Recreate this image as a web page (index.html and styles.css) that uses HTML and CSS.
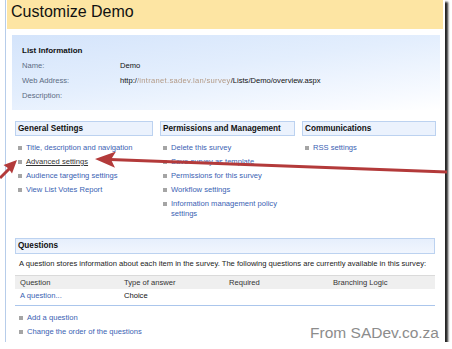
FILE: index.html
```html
<!DOCTYPE html>
<html lang="en">
  <head>
    <meta charset="UTF-8" />
    <title>Customize Demo</title>
    <link rel="stylesheet" href="styles.css">
  </head>
  <body>
    <div class="window">
      <div class="frame">
        <!-- Page title band -->
        <div class="title-bar">
          <h1>Customize Demo</h1>
        </div>

        <!-- List information panel -->
        <div class="info-panel">
          <h2>List Information</h2>
          <div class="info-row"><span class="label">Name:</span><span>Demo</span></div>
          <div class="info-row">
            <span class="label">Web Address:</span>
            <span>http:/<span class="masked">/intranet.sadev.lan/survey</span>/Lists/Demo/overview.aspx</span>
          </div>
          <div class="info-row"><span class="label">Description:</span><span></span></div>
        </div>

        <!-- Three settings columns -->
        <div class="settings">
          <div class="group">
            <h3 class="group-head">General Settings</h3>
            <ul class="links">
              <li><a href="#">Title, description and navigation</a></li>
              <li><a class="current" href="#">Advanced settings</a></li>
              <li><a href="#">Audience targeting settings</a></li>
              <li><a href="#">View List Votes Report</a></li>
            </ul>
          </div>
          <div class="group">
            <h3 class="group-head">Permissions and Management</h3>
            <ul class="links">
              <li><a href="#">Delete this survey</a></li>
              <li><a href="#">Save survey as template</a></li>
              <li><a href="#">Permissions for this survey</a></li>
              <li><a href="#">Workflow settings</a></li>
              <li><a href="#">Information management policy settings</a></li>
            </ul>
          </div>
          <div class="group">
            <h3 class="group-head">Communications</h3>
            <ul class="links">
              <li><a href="#">RSS settings</a></li>
            </ul>
          </div>
        </div>

        <!-- Questions -->
        <div class="questions">
          <h3 class="group-head tall">Questions</h3>
          <p class="note">A question stores information about each item in the survey. The following questions are currently available in this survey:</p>
          <div class="q-wrap">
            <table class="q-table">
              <colgroup>
                <col style="width:104px"><col style="width:105px"><col style="width:104px"><col>
              </colgroup>
              <tr class="q-head">
                <td>Question</td><td>Type of answer</td><td>Required</td><td>Branching Logic</td>
              </tr>
              <tr>
                <td><a href="#">A question...</a></td><td>Choice</td><td></td><td></td>
              </tr>
            </table>
          </div>
          <ul class="links after">
            <li><a href="#">Add a question</a></li>
            <li><a href="#">Change the order of the questions</a></li>
          </ul>
        </div>
      </div>

      <div class="watermark">From SADev.co.za</div>

      <!-- Red annotation arrows drawn over the screenshot -->
      <svg class="annot" width="452" height="349" viewBox="0 0 452 349">
        <line x1="447" y1="172" x2="110" y2="159.6" stroke="#b33a3a" stroke-width="3" />
        <polygon points="95,159 116,151.5 111,159.6 115,167.8" fill="#b33a3a" />
        <line x1="0" y1="178" x2="10" y2="168" stroke="#b33a3a" stroke-width="3" />
        <polygon points="17,160 12,173.5 8.5,168.5 3.5,165" fill="#b33a3a" />
      </svg>
    </div>
  </body>
</html>
```

FILE: styles.css
```css
body {
  margin: 0;
  background: #fff;
  font-family: "Liberation Sans", Arial, sans-serif;
  font-size: 7.6px;
  color: #111;
}
/* Screenshot window with drop shadow */
.window {
  position: relative;
  width: 445px;
  height: 342px;
  padding-left: 5px;
  box-sizing: border-box;
  background: #fff;
  box-shadow: 3px 2px 2px rgba(0,0,0,0.85);
}
.frame {
  height: 100%;
  border-left: 1px solid #b7cdea;
  padding-left: 1px;
  padding-right: 2px;
}
.title-bar {
  height: 29px;
  background: #fde5a3;
  padding-left: 4px;
}
h1 {
  margin: 0;
  font-weight: normal;
  font-size: 16px;
  line-height: 24px;
  color: #111;
}
/* List information */
.info-panel {
  margin: 6px 3px 0 5px;
  padding: 8px 10px 7px;
  height: 75px;
  box-sizing: border-box;
  background: linear-gradient(172deg, #d4e4fb 0%, #e3eefd 45%, #f7faff 85%, #fff 100%);
}
.info-panel h2 {
  margin: 0;
  font-size: 8px;
  line-height: 15px;
}
.info-row {
  display: flex;
  line-height: 15px;
}
.info-row .label {
  width: 98px;
  color: #5b6b82;
}
.masked {
  color: #b39a86;
  filter: blur(0.7px);
  letter-spacing: 0.3px;
}
/* Settings columns */
.settings {
  display: grid;
  grid-template-columns: 138px 135px 134px;
  column-gap: 7px;
  margin: 11px 7px 0 8px;
}
.group-head {
  margin: 0;
  height: 13px;
  line-height: 13px;
  padding-left: 2px;
  font-size: 8.2px;
  background: #ebf2fd;
  border: 1px solid #bcd2f0;
}
.group-head.tall {
  height: 14px;
  line-height: 14px;
  background: linear-gradient(#e6effc, #f1f6fe);
}
.links {
  list-style: none;
  margin: 7px 0 0;
  padding: 0 0 0 3px;
}
.links li {
  display: flex;
  gap: 4px;
  line-height: 10px;
  margin-bottom: 4px;
  padding-right: 8px;
}
.links li:last-child {
  margin-bottom: 0;
}
.links li::before {
  content: "";
  flex: none;
  width: 4px;
  height: 4px;
  margin-top: 3px;
  background: #a5a5a5;
}
a {
  color: #3a62b3;
  text-decoration: none;
}
a.current {
  color: #333;
  text-decoration: underline;
}
/* Questions */
.questions {
  margin: 19px 8px 0 8px;
}
.note {
  margin: 5px 0 0;
  padding-left: 4px;
  line-height: 10px;
  white-space: nowrap;
  color: #222;
}
.q-wrap {
  margin-top: 6px;
  padding-bottom: 2px;
  border-bottom: 1px solid #abc6ec;
}
.q-table {
  width: 100%;
  table-layout: fixed;
  border-collapse: collapse;
}
.q-table td {
  padding: 0 0 0 5px;
  height: 14px;
  line-height: 14px;
  white-space: nowrap;
}
.q-head td {
  height: 13px;
  line-height: 12px;
  background: #efefef;
  border-top: 1px solid #dadada;
  color: #333;
}
.links.after {
  margin-top: 7px;
  padding-left: 4px;
}
.watermark {
  position: absolute;
  right: 6px;
  bottom: 0;
  font-size: 15.5px;
  line-height: 18px;
  color: #8c8c8c;
}
.annot {
  position: absolute;
  left: 0;
  top: 0;
  pointer-events: none;
}
```
